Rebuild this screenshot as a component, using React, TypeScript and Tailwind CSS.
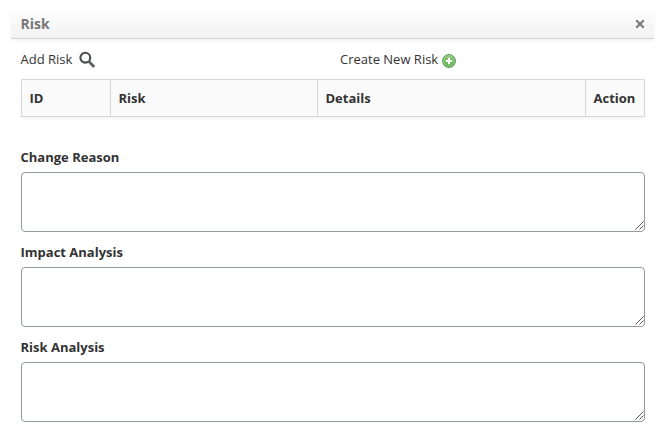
import React from "react";

const fields = ["Change Reason", "Impact Analysis", "Risk Analysis"];

function SearchIcon() {
  return (
    <svg width="18" height="18" viewBox="0 0 18 18" fill="none" className="ml-[5.5px] mt-px">
      <circle cx="7.3" cy="6.7" r="4.9" stroke="#4b4d52" strokeWidth="2.1" />
      <path d="M10.7 10.3 L16.2 15.9" stroke="#5d5f65" strokeWidth="2.8" />
    </svg>
  );
}

function AddIcon() {
  return (
    <svg width="14" height="14" viewBox="0 0 14 14" className="ml-1 mt-[3px]">
      <defs>
        <linearGradient id="green" x1="0" y1="0" x2="0" y2="1">
          <stop offset="0" stopColor="#8fc97d" />
          <stop offset="1" stopColor="#55ab45" />
        </linearGradient>
      </defs>
      <circle cx="7" cy="7" r="6.4" fill="url(#green)" stroke="#4f8f49" strokeWidth="1" />
      <circle cx="7" cy="7" r="5.4" fill="none" stroke="#a5d696" strokeWidth="0.8" />
      <path d="M7 3.8v6.4M3.8 7h6.4" stroke="#fff" strokeWidth="2.1" />
    </svg>
  );
}

function ResizeGrip() {
  return (
    <svg width="9" height="9" viewBox="0 0 9 9" className="absolute bottom-0 right-0">
      <path d="M0.5 8.5L8.5 0.5M4.5 8.5L8.5 4.5" stroke="#555" strokeWidth="1" />
    </svg>
  );
}

export default function App() {
  return (
    <main className="h-[434px] w-[666px] bg-white pl-[11px] pr-3 pt-[11px] font-['Open_Sans','Noto_Sans',sans-serif] text-[13px] leading-5 text-[#333]">
      <header className="flex h-7 items-center justify-between border-b border-[#d4d4d4] bg-linear-to-b from-[#fdfdfd] to-[#f2f2f2] pl-[9.5px] pr-[9px] shadow-[0_2px_4px_-1px_rgba(0,0,0,0.08)]">
        <h1 className="-mt-px text-sm font-bold leading-5 text-[#777]">Risk</h1>
        <svg width="10" height="10" viewBox="0 0 10 10" className="-mt-[2px]">
          <path d="M1.2 1.2L8.8 8.8M8.8 1.2L1.2 8.8" stroke="#777" strokeWidth="2" />
        </svg>
      </header>
      <div className="pl-[10px] pr-[9px]">
        <div className="grid h-10 grid-cols-[319px_1fr]">
          <div className="flex h-10 items-center">
            <span className="-ml-[0.5px]">Add Risk</span>
            <SearchIcon />
          </div>
          <div className="flex h-10 items-center">
            <span>Create New Risk</span>
            <AddIcon />
          </div>
        </div>
        <div className="grid h-[38px] w-[624px] grid-cols-[89px_207px_268px_1fr] border border-[#d8d8d8] bg-[#fafafa] font-bold leading-9 shadow-[0_2px_4px_-1px_rgba(0,0,0,0.08)]">
          <div className="border-r border-[#d8d8d8] pl-[7.5px]">ID</div>
          <div className="border-r border-[#d8d8d8] pl-[7.5px]">Risk</div>
          <div className="border-r border-[#d8d8d8] pl-[7.5px]">Details</div>
          <div className="pl-[7.5px]">Action</div>
        </div>
        <div className="mt-[30px] flex flex-col gap-[10px]">
          {fields.map((label) => (
            <label key={label} className="block">
              <span className="-ml-[0.5px] mb-[5px] block font-bold leading-5">{label}</span>
              <span className="relative block h-[60px] w-[624px]">
                <textarea className="block h-[60px] w-full resize-none rounded border border-[#949a9a] bg-white outline-none" />
                <span className="absolute bottom-[2px] right-px block h-[9px] w-[9px]">
                  <ResizeGrip />
                </span>
              </span>
            </label>
          ))}
        </div>
      </div>
    </main>
  );
}
